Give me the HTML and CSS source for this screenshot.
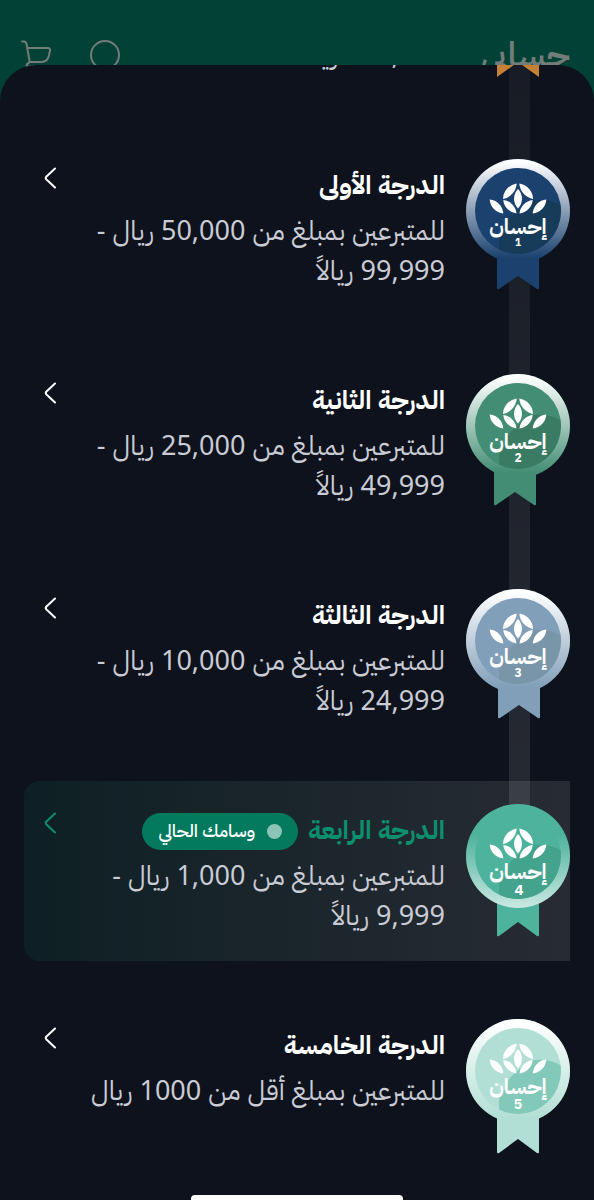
FILE: index.html
```html
<!DOCTYPE html>
<html lang="ar" dir="rtl">
<head>
  <meta charset="utf-8">
  <meta name="viewport" content="width=device-width, initial-scale=1">
  <title>حسابي</title>
  <link rel="stylesheet" href="styles.css">
</head>
<body>
  <!-- shared medal parts -->
  <svg class="defs" aria-hidden="true">
    <defs>
      <linearGradient id="shine" x1="0" y1="0" x2="0" y2="1">
        <stop offset="0.03" stop-color="#fff"/>
        <stop offset="0.95" stop-color="#fff" stop-opacity="0"/>
      </linearGradient>
      <linearGradient id="shine-up" x1="0" y1="1" x2="0" y2="0">
        <stop offset="0" stop-color="#fff" stop-opacity="0.7"/>
        <stop offset="0.7" stop-color="#fff" stop-opacity="0"/>
      </linearGradient>
      <symbol id="face" viewBox="0 0 104 104">
        <circle class="tone" cx="52" cy="52" r="43"/>
        <path class="shade" d="M94.500 46C86 41 77 40 69 41C62 42 58 46 48 55C42 60 41 63 40 69C35 73 33 78 33 84V90.500A43 43 0 0 0 94.500 46Z"/>
        <g fill="#fff">
          <path d="M37 40A16 16 0 0 1 50.700 24.500A17 17 0 0 1 37 40Z"/>
          <path d="M67 40A16 16 0 0 0 53.300 24.500A17 17 0 0 0 67 40Z"/>
          <path d="M52 30A14 14 0 0 1 52 49.500A14 14 0 0 1 52 30Z"/>
          <path d="M37.300 41A15 15 0 0 1 50.500 54.500A15 15 0 0 1 37.300 41Z"/>
          <path d="M66.700 41A15 15 0 0 0 53.500 54.500A15 15 0 0 0 66.700 41Z"/>
          <path d="M23.700 40.500A15 15 0 0 1 37.300 54.500A15 15 0 0 1 23.700 40.500Z"/>
          <path d="M80.300 40.500A15 15 0 0 0 66.700 54.500A15 15 0 0 0 80.300 40.500Z"/>
        </g>
      </symbol>
      <symbol id="arrow" viewBox="0 0 12 22">
        <path d="M11 1.500L2.500 9.500Q1 11 2.500 12.500L11 20.500" fill="none" stroke="currentColor" stroke-width="2" stroke-linecap="round"/>
      </symbol>
    </defs>
  </svg>

  <header class="topbar">
    <h1>حسابي</h1>
    <nav>
      <button type="button" aria-label="بحث">
        <svg width="32" height="32" viewBox="0 0 32 32"><circle cx="16" cy="15" r="14"/><path d="M26 25l5 5"/></svg>
      </button>
      <button type="button" aria-label="السلة">
        <svg width="32" height="32" viewBox="0 0 32 32"><path d="M2 1.500h2q2 0 2.500 2.500l3 16.500q.5 2-1.500 3t-1 3h20M7 8h20.500q3 0 2.500 2.500l-1 5q-1.500 6.500-7.500 6.500H10"/></svg>
      </button>
    </nav>
  </header>

  <main class="sheet">
    <ul class="levels">
      <li class="level bronze">
        <svg class="medal" width="104" height="136" viewBox="0 0 104 136">
          <path class="tone" d="M31 90H73V133L52 118L31 133Z"/>
          <circle class="tone" cx="52" cy="52" r="52"/>
          <circle cx="52" cy="52" r="52" fill="url(#shine)"/>
          <use href="#face" width="104" height="104"/>
        </svg>
        <div class="info">
          <h2>الدرجة الممتازة</h2>
          <p>للمتبرعين بمبلغ من 100,000 ريال -<br>499,999 ريالاً</p>
        </div>
        <button class="open" type="button" aria-label="عرض"><svg width="12" height="22"><use href="#arrow"/></svg></button>
      </li>

      <li class="level navy">
        <svg class="medal" width="104" height="136" viewBox="0 0 104 136">
          <path class="tone" d="M31 90H73V129q0 2-2 1L52 117L33 130q-2 1-2-1Z"/>
          <circle class="tone" cx="52" cy="52" r="52"/>
          <circle cx="52" cy="52" r="52" fill="url(#shine)"/>
          <use href="#face" width="104" height="104"/>
          <text class="brand" x="52" y="75">إحسان</text>
          <text class="rank" x="52" y="87" font-size="10">1</text>
        </svg>
        <div class="info">
          <h2>الدرجة الأولى</h2>
          <p>للمتبرعين بمبلغ من 50,000 ريال - 99,999 ريالاً</p>
        </div>
        <button class="open" type="button" aria-label="عرض"><svg width="12" height="22"><use href="#arrow"/></svg></button>
      </li>

      <li class="level green">
        <svg class="medal" width="104" height="136" viewBox="0 0 104 136">
          <path class="tone" d="M28 90H70V130q0 2-2 1L49 118L30 131q-2 1-2-1Z"/>
          <circle class="tone" cx="52" cy="52" r="52"/>
          <circle cx="52" cy="52" r="52" fill="url(#shine)"/>
          <use href="#face" width="104" height="104"/>
          <text class="brand" x="52" y="75">إحسان</text>
          <text class="rank" x="52" y="88" font-size="12">2</text>
        </svg>
        <div class="info">
          <h2>الدرجة الثانية</h2>
          <p>للمتبرعين بمبلغ من 25,000 ريال - 49,999 ريالاً</p>
        </div>
        <button class="open" type="button" aria-label="عرض"><svg width="12" height="22"><use href="#arrow"/></svg></button>
      </li>

      <li class="level steel">
        <svg class="medal" width="104" height="136" viewBox="0 0 104 136">
          <path class="tone" d="M32 90H74V128q0 2-2 1L53 116L34 129q-2 1-2-1Z"/>
          <circle class="tone" cx="52" cy="52" r="52"/>
          <circle cx="52" cy="52" r="52" fill="url(#shine)"/>
          <use href="#face" width="104" height="104"/>
          <text class="brand" x="52" y="75">إحسان</text>
          <text class="rank" x="52" y="88" font-size="12">3</text>
        </svg>
        <div class="info">
          <h2>الدرجة الثالثة</h2>
          <p>للمتبرعين بمبلغ من 10,000 ريال - 24,999 ريالاً</p>
        </div>
        <button class="open" type="button" aria-label="عرض"><svg width="12" height="22"><use href="#arrow"/></svg></button>
      </li>

      <li class="level mint current">
        <svg class="medal" width="104" height="136" viewBox="0 0 104 136">
          <path class="tone" d="M31 90H73V131q0 2-2 1L52 118L33 132q-2 1-2-1Z"/>
          <circle class="tone" cx="52" cy="52" r="52"/>
          <circle cx="52" cy="52" r="52" fill="url(#shine-up)"/>
          <use href="#face" width="104" height="104"/>
          <text class="brand" x="52" y="75">إحسان</text>
          <text class="rank" x="53" y="91" font-size="15">4</text>
        </svg>
        <div class="info">
          <h2>الدرجة الرابعة <span class="pill">وسامك الحالي</span></h2>
          <p>للمتبرعين بمبلغ من 1,000 ريال - 9,999 ريالاً</p>
        </div>
        <button class="open" type="button" aria-label="عرض"><svg width="12" height="22"><use href="#arrow"/></svg></button>
      </li>

      <li class="level pale">
        <svg class="medal" width="104" height="136" viewBox="0 0 104 136">
          <path class="tone" d="M31 90H73V133q0 2-2 1L52 120L33 134q-2 1-2-1Z"/>
          <circle class="tone" cx="52" cy="52" r="52"/>
          <circle cx="52" cy="52" r="52" fill="url(#shine)"/>
          <use href="#face" width="104" height="104"/>
          <text class="brand" x="52" y="75">إحسان</text>
          <text class="rank" x="52" y="90" font-size="14">5</text>
        </svg>
        <div class="info">
          <h2>الدرجة الخامسة</h2>
          <p>للمتبرعين بمبلغ أقل من 1000 ريال</p>
        </div>
        <button class="open" type="button" aria-label="عرض"><svg width="12" height="22"><use href="#arrow"/></svg></button>
      </li>
    </ul>
    <div class="home-bar"></div>
  </main>
</body>
</html>
```

FILE: styles.css
```css
* { box-sizing: border-box; }

body {
  margin: 0;
  min-height: 100vh;
  display: flex;
  flex-direction: column;
  background: #0e121c;
  color: #fff;
  font-family: "IBM Plex Sans Arabic", "Noto Sans", "DejaVu Sans", sans-serif;
}

h1, h2, p, ul { margin: 0; padding: 0; }

button {
  padding: 0;
  border: 0;
  background: none;
  color: inherit;
  cursor: pointer;
}
button svg { display: block; }

.defs { display: block; width: 0; height: 0; }

.topbar {
  display: flex;
  justify-content: space-between;
  align-items: flex-start;
  height: 104px;
  padding: 32px 24px 0 20px;
  background: #024236;
  color: #747c79;
}
.topbar h1 { font-size: 35px; line-height: 48px; font-weight: 600; }
.topbar nav { display: flex; gap: 37px; padding-top: 8px; }
.topbar svg { fill: none; stroke: currentColor; stroke-width: 2; stroke-linecap: round; }

.sheet {
  position: relative;
  flex: 1;
  display: flex;
  flex-direction: column;
  margin-top: -39px;
  padding: 0 24px;
  border-radius: 36px 36px 0 0;
  background: #0e121c;
  overflow: hidden;
}

/* scrolled so that the first row is nearly gone */
.levels {
  position: relative;
  display: flex;
  flex-direction: column;
  gap: 35px;
  margin-top: -144px;
  list-style: none;
}
.levels::before {
  content: "";
  position: absolute;
  z-index: 1;
  top: 0;
  bottom: 340px;
  right: 40px;
  width: 21px;
  background: linear-gradient(rgba(255,255,255,.03), rgba(255,255,255,.1));
}

.level {
  display: flex;
  align-items: flex-start;
  gap: 21px;
  height: 180px;
  padding: 23px 0 0 20px;
}
.medal { position: relative; z-index: 2; flex: none; overflow: visible; }
.tone { fill: var(--tone); }
.shade { fill: var(--shade); }
.brand, .rank {
  fill: #fff;
  font-weight: 700;
  text-anchor: middle;
  direction: rtl;
}
.brand { font-size: 21px; }

.info { flex: 1; min-width: 0; padding-top: 7px; }
.info h2 {
  display: flex;
  align-items: center;
  gap: 10px;
  font-size: 26px;
  line-height: 40px;
  font-weight: 700;
  white-space: nowrap;
}
.info p {
  margin-top: 4px;
  font-family: "Noto Sans", "IBM Plex Sans Arabic", "DejaVu Sans", sans-serif;
  font-size: 27px;
  line-height: 40px;
  color: #c9cbd5;
}
.bronze p { line-height: 39px; }

.open { flex: none; margin-top: 8px; }

.current {
  border-radius: 0 0 0 16px;
  border-top-left-radius: 16px;
  background: linear-gradient(to right, #0e2025, #282b33);
}
.current h2, .current .open { color: #0b8f6c; }

.pill {
  display: flex;
  align-items: center;
  gap: 12px;
  height: 37px;
  padding: 0 16px;
  border-radius: 19px;
  background: #037a5d;
  color: #fff;
  font-size: 18px;
  font-weight: 500;
}
.pill::before {
  content: "";
  width: 15px;
  height: 15px;
  border-radius: 50%;
  background: #8cc5b5;
}

.bronze { --tone: #c48136; --shade: #a96c2b; }
.navy { --tone: #1b426f; --shade: #173c5a; }
.green { --tone: #438d74; --shade: #3a7b63; }
.steel { --tone: #819fb9; --shade: #7896a8; }
.mint { --tone: #4eb39d; --shade: #44a38d; }
.pale { --tone: #b2dfd5; --shade: #83c9ba; }

.home-bar {
  width: 212px;
  height: 5px;
  margin: auto auto 0;
  border-radius: 4px 4px 0 0;
  background: #fff;
}
```
